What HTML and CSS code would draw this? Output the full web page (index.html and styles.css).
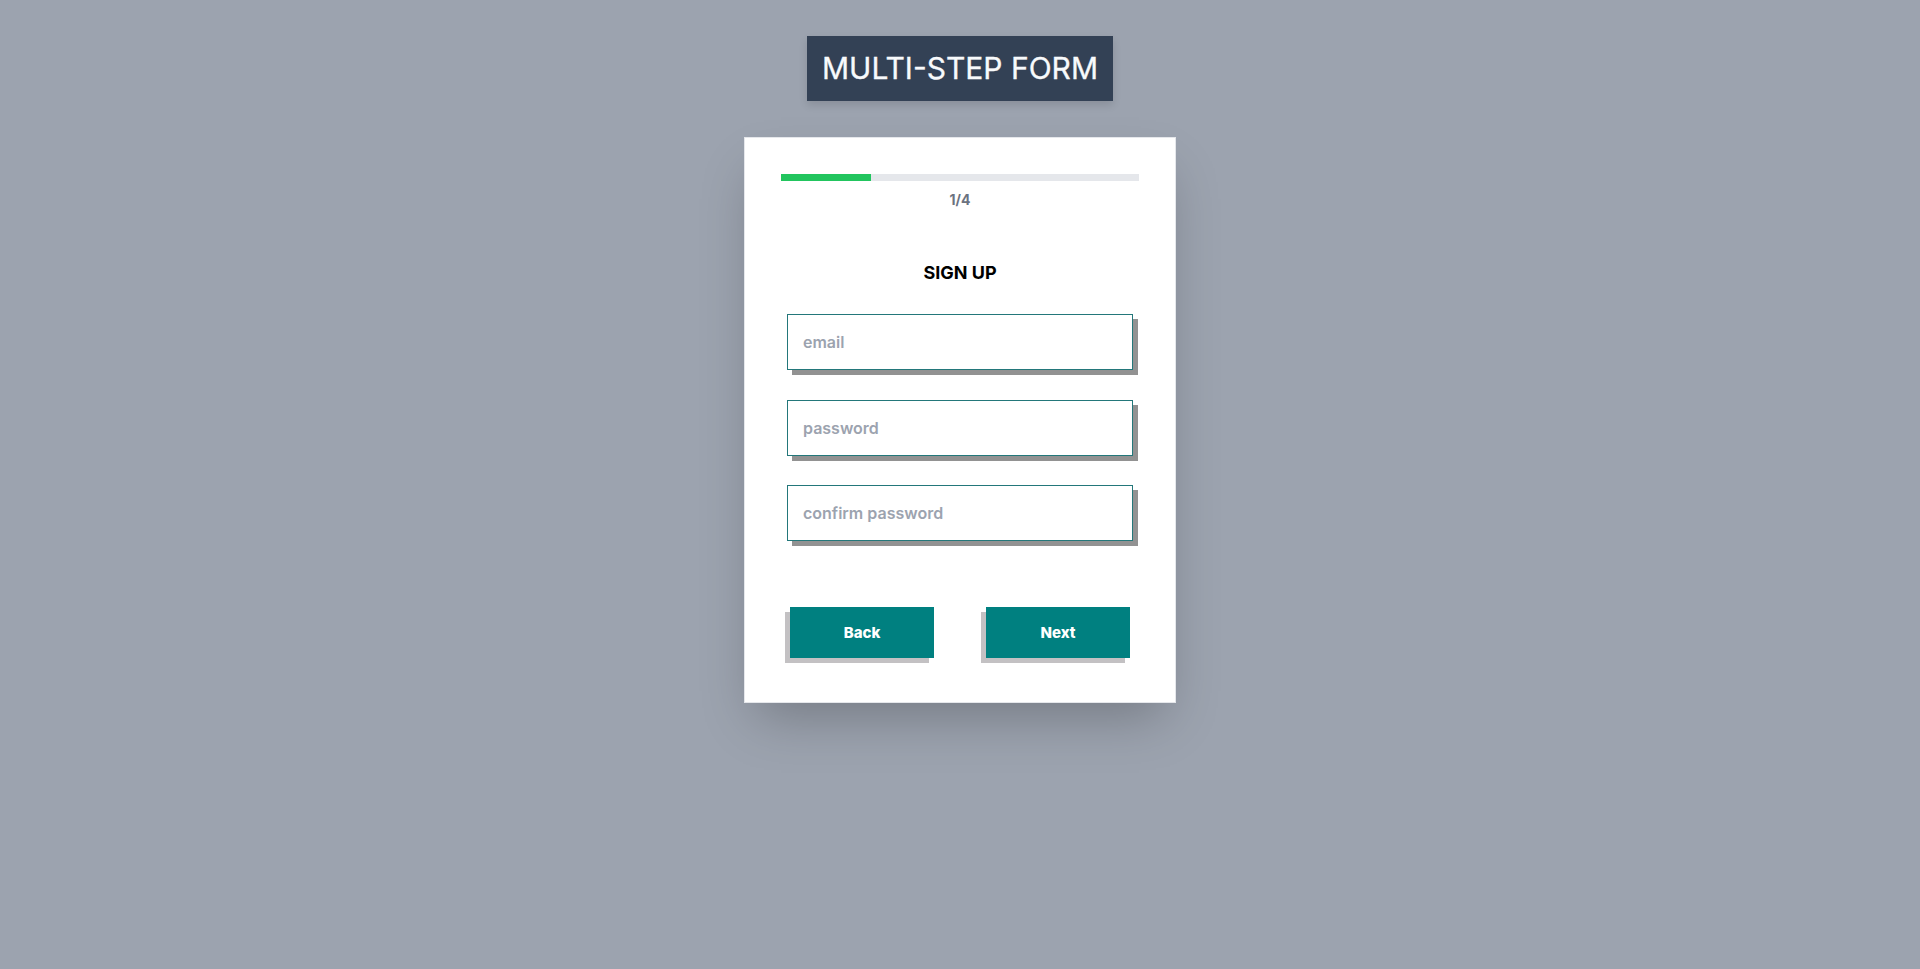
FILE: index.html
```html
<!DOCTYPE html>
<html lang="en">
<head>
<meta charset="utf-8">
<title>Multi-step form</title>
<link rel="stylesheet" href="styles.css">
</head>
<body>
  <div class="page">
    <h1 class="title">MULTI-STEP FORM</h1>
    <div class="card">
      <div class="progress"><div class="progress-fill" style="width:25%"></div></div>
      <div class="step">1/4</div>
      <h2 class="heading">SIGN UP</h2>
      <form class="form">
        <input class="field" type="email" placeholder="email">
        <input class="field" type="password" placeholder="password">
        <input class="field" type="password" placeholder="confirm password">
        <div class="actions">
          <button type="button" class="btn btn-back">Back</button>
          <button type="button" class="btn btn-next">Next</button>
        </div>
      </form>
    </div>
  </div>
</body>
</html>
```
FILE: styles.css
```css
* { box-sizing: border-box; }
html, body { margin: 0; padding: 0; }
body {
  background: #9ca3af;
  font-family: Inter, "Noto Sans", sans-serif;
  min-height: 969px;
}
.page {
  display: flex;
  flex-direction: column;
  align-items: center;
}
.title {
  margin: 36px 0 0;
  height: 65px;
  line-height: 65px;
  padding: 0 15px;
  background: #334155;
  color: #f8fafc;
  font-size: 30px;
  font-weight: 400;
  -webkit-text-stroke: 0.3px #f8fafc;
  box-shadow: 0 4px 8px rgba(0,0,0,0.12);
}
.card {
  margin-top: 36px;
  width: 432px;
  background: #fff;
  border: 1px solid #e5e7eb;
  padding: 36px 36px 36px;
  box-shadow: 0 25px 50px -12px rgba(0,0,0,0.25);
}
.progress {
  height: 7px;
  background: #e5e7eb;
}
.progress-fill {
  height: 100%;
  background: #22c55e;
}
.step {
  margin-top: 9px;
  text-align: center;
  font-size: 14px;
  line-height: 20px;
  font-weight: 700;
  color: #6b7280;
}
.heading {
  margin: 49px 0 0;
  text-align: center;
  font-size: 18px;
  line-height: 28px;
  font-weight: 700;
  color: #000;
}
.form {
  margin-top: 27px;
  display: flex;
  flex-direction: column;
  gap: 29.5px;
}
.field {
  display: block;
  margin: 0 6px;
  height: 56px;
  padding: 0 15px;
  border: 1px solid #23777a;
  border-radius: 0;
  box-shadow: 5px 5px 0 #929292;
  font-family: Inter, "Noto Sans", sans-serif;
  font-size: 16px;
  font-weight: 600;
  color: #111827;
  background: #fff;
  outline: none;
}
.field::placeholder {
  color: #9ca3af;
}
.actions {
  margin-top: 36.5px;
  padding: 0 9px 8px;
  display: flex;
  justify-content: space-between;
}
.btn {
  width: 144px;
  height: 51px;
  border: none;
  border-radius: 0;
  background: #008080;
  color: #fff;
  font-family: Inter, "Noto Sans", sans-serif;
  font-size: 15px;
  font-weight: 800;
  box-shadow: -5px 5px 0 #c3c1c3;
  cursor: pointer;
}
```
